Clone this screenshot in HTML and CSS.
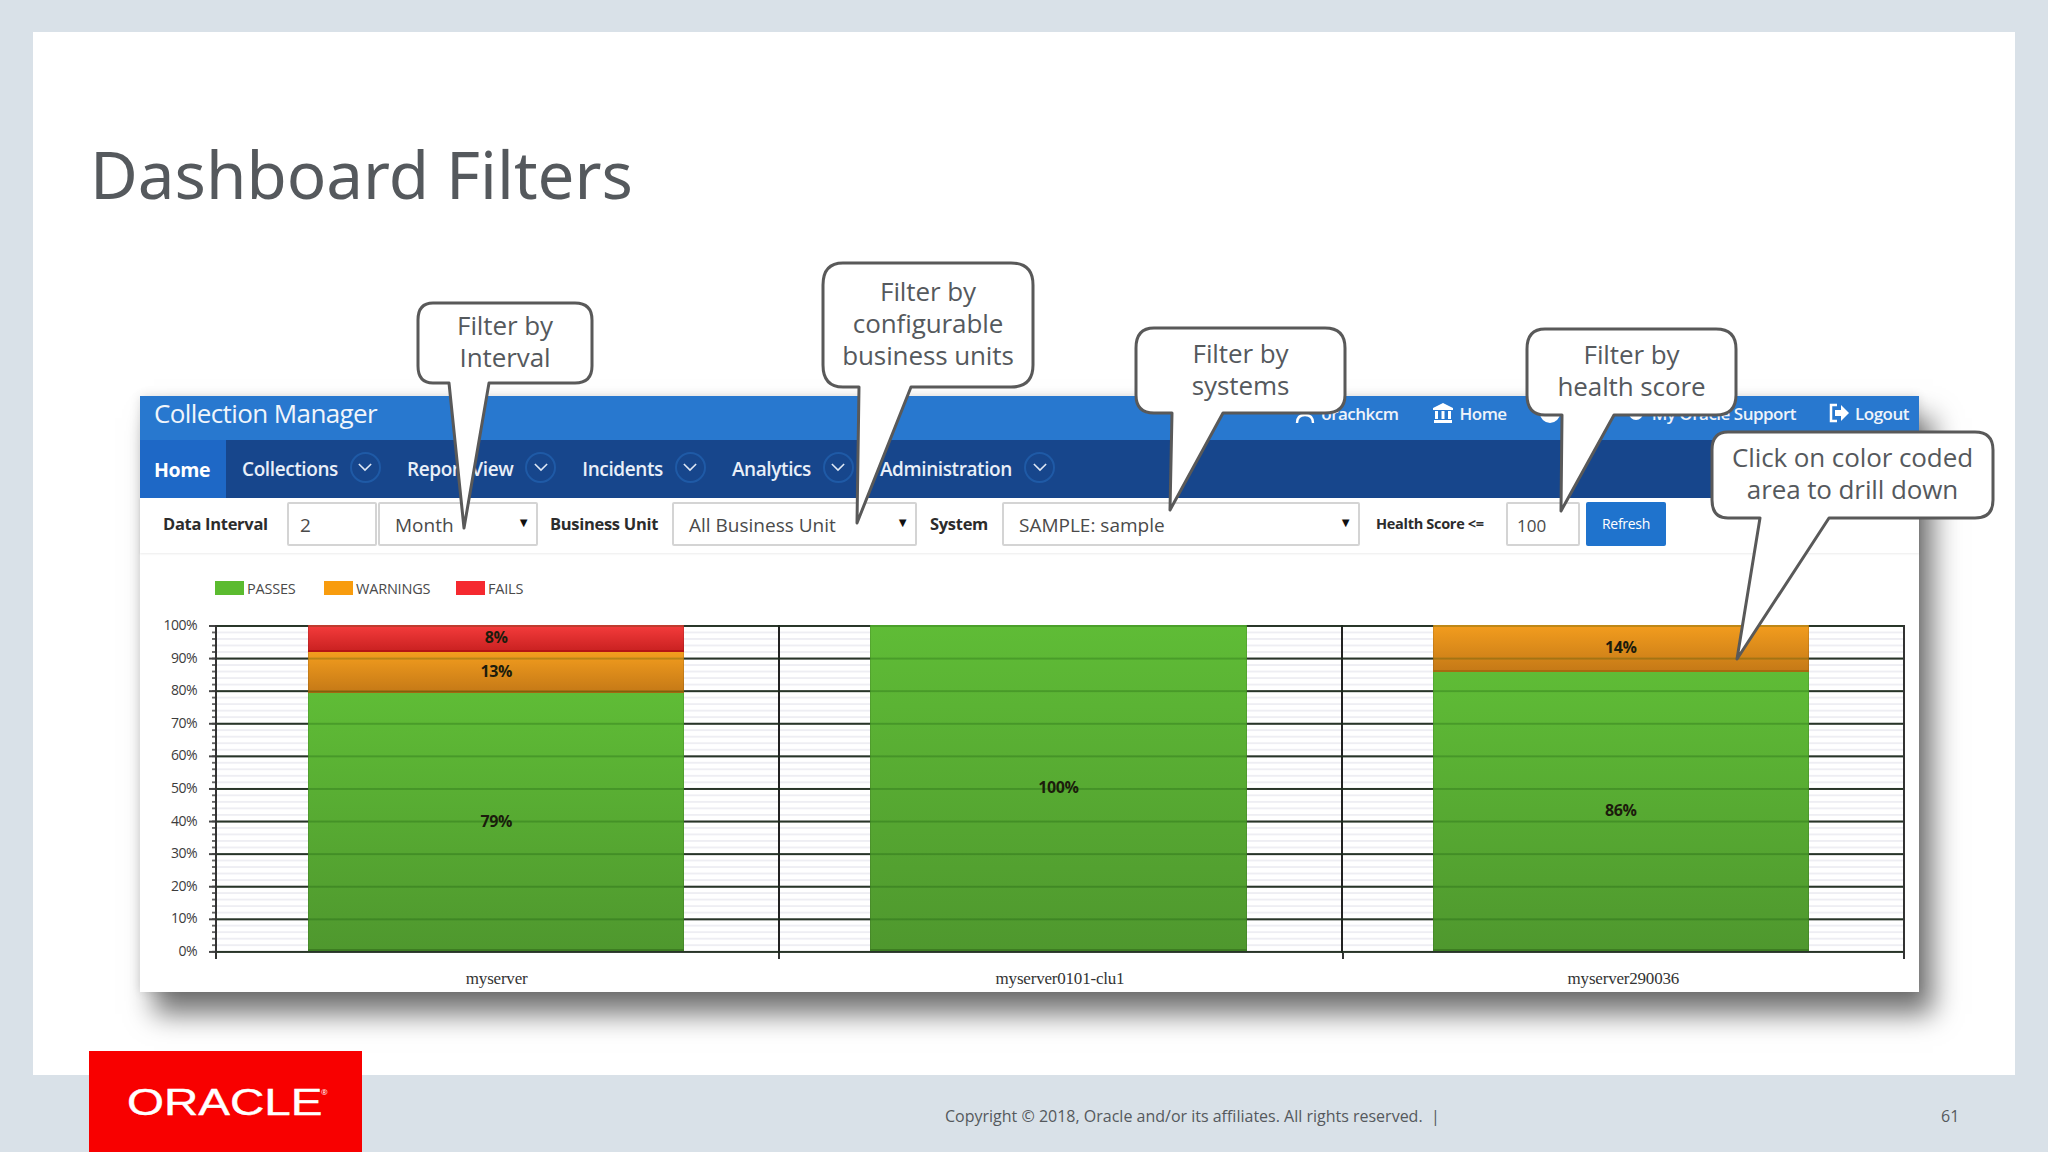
FILE: index.html
```html
<!DOCTYPE html>
<html lang="en">

<head>
    <meta charset="UTF-8" />
    <title>Dashboard Filters</title>
    <link rel="stylesheet" href="styles.css">
</head>

<body>
    <div class="slide">
        <h1 class="slide-title">Dashboard Filters</h1>

        <div class="app">
            <div class="app-header">
                <div class="app-name">Collection Manager</div>
                <div class="app-links">
                    <span class="app-link link-user">
                        <svg class="link-icon" viewBox="0 0 22 22"><path d="M3 21c0-5 3-8 8-8s8 3 8 8" fill="none" stroke="#fff" stroke-width="2.4"/><circle cx="11" cy="6" r="5" fill="#fff"/></svg>
                        orachkcm
                    </span>
                    <span class="app-link link-home">
                        <svg class="link-icon" viewBox="0 0 22 22"><path d="M11 1 1 6v2h20V6zM3 9h3v8H3zM9.500 9h3v8h-3zM16 9h3v8h-3zM2 18h18v3H2z" fill="#fff"/></svg>
                        Home
                    </span>
                    <span class="app-link link-help">
                        <svg class="link-icon" viewBox="0 0 22 22"><circle cx="11" cy="11" r="10" fill="#fff"/></svg>
                    </span>
                    <span class="app-link link-support">
                        <svg class="link-icon" viewBox="0 0 22 22"><circle cx="11" cy="11" r="7" fill="#fff"/></svg>
                        My Oracle Support
                    </span>
                    <span class="app-link link-logout">
                        <svg class="link-icon" viewBox="0 0 22 22"><path d="M9 3H3v16h6" fill="none" stroke="#fff" stroke-width="2.500"/><path d="M7 8h6V3l8 8-8 8v-5H7z" fill="#fff"/></svg>
                        Logout
                    </span>
                </div>
            </div>

            <div class="app-nav">
                <div class="nav-home">Home</div>
                <div class="nav-item">Collections <span class="nav-chevron"><svg viewBox="0 0 16 10"><path d="M1 1l7 7 7-7" fill="none" stroke="#dfe8f5" stroke-width="1.800"/></svg></span></div>
                <div class="nav-item">Report View <span class="nav-chevron"><svg viewBox="0 0 16 10"><path d="M1 1l7 7 7-7" fill="none" stroke="#dfe8f5" stroke-width="1.800"/></svg></span></div>
                <div class="nav-item">Incidents <span class="nav-chevron"><svg viewBox="0 0 16 10"><path d="M1 1l7 7 7-7" fill="none" stroke="#dfe8f5" stroke-width="1.800"/></svg></span></div>
                <div class="nav-item">Analytics <span class="nav-chevron"><svg viewBox="0 0 16 10"><path d="M1 1l7 7 7-7" fill="none" stroke="#dfe8f5" stroke-width="1.800"/></svg></span></div>
                <div class="nav-item">Administration <span class="nav-chevron"><svg viewBox="0 0 16 10"><path d="M1 1l7 7 7-7" fill="none" stroke="#dfe8f5" stroke-width="1.800"/></svg></span></div>
            </div>

            <div class="filters">
                <span class="filter-label label-interval">Data Interval</span>
                <div class="field field-number">2</div>
                <div class="field field-period">Month <span class="field-arrow">▼</span></div>
                <span class="filter-label label-unit">Business Unit</span>
                <div class="field field-unit">All Business Unit <span class="field-arrow">▼</span></div>
                <span class="filter-label label-system">System</span>
                <div class="field field-system">SAMPLE: sample <span class="field-arrow">▼</span></div>
                <span class="filter-label label-health">Health Score &lt;=</span>
                <div class="field field-score">100</div>
                <div class="refresh">Refresh</div>
            </div>

            <div class="legend">
                <span class="legend-swatch swatch-pass"></span><span class="legend-text text-pass">PASSES</span>
                <span class="legend-swatch swatch-warn"></span><span class="legend-text text-warn">WARNINGS</span>
                <span class="legend-swatch swatch-fail"></span><span class="legend-text">FAILS</span>
            </div>

            <div class="chart">
                <div class="y-axis">
                    <span>100%</span>
                    <span>90%</span>
                    <span>80%</span>
                    <span>70%</span>
                    <span>60%</span>
                    <span>50%</span>
                    <span>40%</span>
                    <span>30%</span>
                    <span>20%</span>
                    <span>10%</span>
                    <span>0%</span>
                </div>
                <div class="y-ticks"></div>
                <div class="plot">
                    <div class="category">
                        <div class="bar">
                            <div class="seg seg-fail" style="height: 8.2%">8%</div>
                            <div class="seg seg-warn" style="height: 12.6%">13%</div>
                            <div class="seg seg-pass" style="height: 79.2%">79%</div>
                        </div>
                    </div>
                    <div class="category">
                        <div class="bar">
                            <div class="seg seg-pass" style="height: 100%">100%</div>
                        </div>
                    </div>
                    <div class="category">
                        <div class="bar">
                            <div class="seg seg-warn" style="height: 14.3%">14%</div>
                            <div class="seg seg-pass" style="height: 85.7%">86%</div>
                        </div>
                    </div>
                    <div class="plot-lines"></div>
                </div>
            </div>
            <div class="x-axis">
                <div class="x-label">myserver</div>
                <div class="x-label">myserver0101-clu1</div>
                <div class="x-label">myserver290036</div>
            </div>
        </div>

        <!-- callouts sit over the app, tails drawn in page coordinates of each box -->
        <div class="callout callout-interval">
            <svg class="callout-shape" width="178" height="229" viewBox="0 0 178 229"><path d="M17 2H159Q176 2 176 19V65Q176 82 159 82H73L48 227 33 82H17Q2 82 2 65V19Q2 2 17 2Z"/></svg>
            <div class="callout-text">Filter by<br>Interval</div>
        </div>
        <div class="callout callout-units">
            <svg class="callout-shape" width="214" height="264" viewBox="0 0 214 264"><path d="M22 2H190Q212 2 212 24V104Q212 126 190 126H90L36 262 38 126H22Q2 126 2 104V24Q2 2 22 2Z"/></svg>
            <div class="callout-text">Filter by<br>configurable<br>business units</div>
        </div>
        <div class="callout callout-systems">
            <svg class="callout-shape" width="213" height="186" viewBox="0 0 213 186"><path d="M20 2H191Q211 2 211 22V69Q211 87 191 87H89L36 184 38 87H20Q2 87 2 69V22Q2 2 20 2Z"/></svg>
            <div class="callout-text">Filter by<br>systems</div>
        </div>
        <div class="callout callout-health">
            <svg class="callout-shape" width="213" height="186" viewBox="0 0 213 186"><path d="M20 2H191Q211 2 211 22V68Q211 88 191 88H89L36 184 37 88H20Q2 88 2 68V22Q2 2 20 2Z"/></svg>
            <div class="callout-text">Filter by<br>health score</div>
        </div>
        <div class="callout callout-drill">
            <svg class="callout-shape" width="285" height="231" viewBox="0 0 285 231"><path d="M18 2H265Q283 2 283 20V70Q283 88 265 88H119L27 229 50 88H18Q2 88 2 70V20Q2 2 18 2Z"/></svg>
            <div class="callout-text">Click on color coded<br>area to drill down</div>
        </div>
    </div>

    <div class="footer">
        <span class="copyright">Copyright © 2018, Oracle and/or its affiliates. All rights reserved.&nbsp; |</span>
        <span class="page-number">61</span>
    </div>

    <div class="oracle-logo">
        <span class="oracle-word">ORACLE</span><span class="oracle-reg">®</span>
    </div>
</body>

</html>
```

FILE: styles.css
```css
html,
body {
    margin: 0;
    height: 1152px;
    overflow: hidden;
}

body {
    background-color: #d9e1e8;
    font-family: "Open Sans", "Noto Sans", sans-serif;
    padding-top: 32px;
    box-sizing: border-box;
    position: relative;
}

.slide {
    position: relative;
    box-sizing: border-box;
    margin: 0 33px;
    height: 1043px;
    background-color: #fff;
    padding-top: 96px;
}

.slide-title {
    margin: 0 0 0 57px;
    height: 268px;
    font-family: "Noto Sans", sans-serif;
    font-size: 65.500px;
    line-height: 92px;
    font-weight: 400;
    color: #55595d;
}

/* app screenshot */
.app {
    margin-left: 107px;
    width: 1779px;
    height: 596px;
    background-color: #fff;
    box-shadow: 14px 22px 26px rgba(0, 0, 0, 0.55), 0 0 10px rgba(0, 0, 0, 0.12);
}

.app-header {
    display: flex;
    justify-content: space-between;
    align-items: center;
    height: 44px;
    box-sizing: border-box;
    padding-bottom: 10px;
    background-color: #2878cf;
    color: #fff;
}

.app-name {
    margin-left: 14px;
    font-size: 26px;
    letter-spacing: -0.6px;
    color: #f0f5fb;
}

.app-links {
    display: flex;
    align-items: center;
    font-size: 17px;
    letter-spacing: -0.5px;
    font-weight: 600;
    padding-right: 10px;
    color: #eef3fa;
}

.app-link {
    display: flex;
    align-items: center;
    gap: 5px;
}

.link-home {
    margin-left: 34px;
}

.link-help {
    margin-left: 32px;
}

.link-support {
    margin-left: 64px;
}

.link-logout {
    margin-left: 32px;
}

.link-icon {
    width: 22px;
    height: 22px;
}

.app-nav {
    display: flex;
    align-items: center;
    height: 58px;
    background-color: #17468c;
    color: #e9eff8;
    font-size: 19px;
    letter-spacing: -0.4px;
    font-weight: 600;
}

.nav-home {
    display: flex;
    align-items: center;
    height: 100%;
    width: 86px;
    box-sizing: border-box;
    padding-left: 14px;
    margin-right: 16px;
    background-color: #1e68c6;
    color: #fff;
    font-size: 19.500px;
    font-weight: 700;
}

.nav-item {
    display: flex;
    align-items: center;
    gap: 12px;
    margin-right: 26px;
}

.nav-chevron {
    display: flex;
    align-items: center;
    justify-content: center;
    box-sizing: border-box;
    width: 31px;
    height: 31px;
    border: 2px solid #1f5aa6;
    border-radius: 50%;
    margin-top: -4px;
}

.nav-chevron svg {
    width: 14px;
    height: 9px;
}

.filters {
    display: flex;
    align-items: center;
    height: 55px;
    box-sizing: border-box;
    padding-bottom: 4px;
    box-shadow: 0 1px 2px rgba(0, 0, 0, 0.08);
    font-size: 16px;
}

.filter-label {
    font-weight: 700;
    color: #2c2c2c;
    font-size: 16.500px;
    letter-spacing: -0.3px;
}

.label-interval {
    margin-left: 23px;
    width: 124px;
}

.label-unit {
    margin-left: 12px;
    width: 122px;
}

.label-system {
    margin-left: 13px;
    width: 72px;
}

.label-health {
    margin-left: 16px;
    width: 130px;
    font-size: 14.500px;
}

.field {
    position: relative;
    box-sizing: border-box;
    height: 44px;
    line-height: 43px;
    background-color: #fff;
    border: 2px solid #d4d4d4;
    border-radius: 2px;
    padding-left: 15px;
    font-size: 19px;
    color: #4a4a4a;
}

.field-number {
    width: 90px;
    padding-left: 11px;
}

.field-period {
    width: 160px;
    margin-left: 1px;
}

.field-unit {
    width: 245px;
}

.field-system {
    width: 358px;
}

.field-score {
    width: 74px;
    padding-left: 9px;
    font-size: 17px;
}

.field-arrow {
    position: absolute;
    right: 6px;
    top: -3px;
    font-size: 13px;
    color: #111;
}

.refresh {
    width: 80px;
    height: 44px;
    margin-left: 6px;
    line-height: 44px;
    text-align: center;
    font-size: 14px;
    letter-spacing: -0.3px;
    color: #fff;
    background-color: #1f73cd;
    border-radius: 2px;
}

.legend {
    display: flex;
    align-items: center;
    height: 14px;
    margin: 28px 0 0 75px;
    font-size: 14.500px;
    color: #4a4a4a;
}

.legend-swatch {
    width: 29px;
    height: 14px;
    margin-right: 3px;
}

.legend-text {
    letter-spacing: -0.2px;
}

.text-pass {
    width: 77px;
}

.text-warn {
    width: 100px;
}

.swatch-pass {
    background-color: #5bbb2f;
}

.swatch-warn {
    background-color: #f89c0e;
}

.swatch-fail {
    background-color: #f5292f;
}

/* chart */
.chart {
    display: flex;
    margin-top: 30px;
    height: 326px;
}

.y-axis {
    display: flex;
    flex-direction: column;
    justify-content: space-between;
    box-sizing: border-box;
    width: 57px;
    height: 344px;
    margin-top: -9px;
    margin-right: 12px;
    text-align: right;
    font-size: 14px;
    line-height: 18px;
    letter-spacing: -0.5px;
    color: #3c3c3c;
}

.y-ticks {
    width: 6px;
    height: 328px;
    background-image:
        linear-gradient(#444 2px, transparent 2px),
        linear-gradient(#666 2px, transparent 2px);
    background-size: 100% 32.600px, 3px 6.520px;
    background-repeat: repeat-y;
    background-position: 0 0, right 0;
}

.plot {
    position: relative;
    display: flex;
    flex-shrink: 0;
    width: 1690px;
    height: 328px;
    box-sizing: border-box;
    border-left: 2px solid #333;
    border-right: 2px solid #333;
    background-image:
        linear-gradient(#333 2px, transparent 2px),
        linear-gradient(#eeeef3 2px, transparent 2px);
    background-size: 100% 32.600px, 100% 6.520px;
}

.category {
    flex: 1;
    box-sizing: border-box;
    padding: 0 94px 0 90px;
    border-left: 2px solid #222;
}

.category:first-child {
    padding-left: 91px;
    border-left: 0;
}

.bar {
    display: flex;
    flex-direction: column;
    height: 326px;
}

.seg {
    display: flex;
    align-items: center;
    justify-content: center;
    box-sizing: border-box;
    font-size: 16px;
    font-weight: 700;
    letter-spacing: -0.4px;
    color: #1c1c0c;
    box-shadow: inset 1px 0 0 rgba(0, 0, 0, 0.1), inset -1px 0 0 rgba(0, 0, 0, 0.1);
}

.seg-pass {
    background-image: linear-gradient(#5fbc36, #4f982e);
    border-bottom: 2px solid #3d7d22;
}

.seg-warn {
    background-image: linear-gradient(#f39d1e, #c67a17);
    border-bottom: 2px solid #a86a10;
}

.seg-fail {
    background-image: linear-gradient(#f53c3c, #cb2222);
    border-bottom: 2px solid #b51414;
}

/* darker grid lines showing through the bars */
.plot-lines {
    position: absolute;
    inset: 0;
    background-image: linear-gradient(rgba(0, 60, 0, 0.22) 2px, transparent 2px);
    background-size: 100% 32.600px;
    pointer-events: none;
}

.x-axis {
    display: flex;
    width: 1690px;
    margin-left: 75px;
    margin-top: 2px;
    font-family: "Liberation Serif", serif;
    font-size: 17px;
    letter-spacing: -0.2px;
    color: #333;
    text-align: center;
}

.x-label {
    position: relative;
    flex: 1;
    padding-top: 16px;
}

.x-label::before {
    content: "";
    position: absolute;
    left: 0;
    top: 0;
    width: 2px;
    height: 6px;
    background-color: #333;
}

.x-label:last-child::after {
    content: "";
    position: absolute;
    right: 0;
    top: 0;
    width: 2px;
    height: 6px;
    background-color: #333;
}

/* callouts */
.callout {
    position: absolute;
}

.callout-shape {
    display: block;
}

.callout-shape path {
    fill: #fff;
    stroke: #595959;
    stroke-width: 3;
    stroke-linejoin: round;
}

.callout-text {
    position: absolute;
    left: 0;
    right: 0;
    top: 11px;
    text-align: center;
    font-family: "Open Sans", sans-serif;
    font-size: 26px;
    line-height: 32px;
    letter-spacing: -0.1px;
    color: #55595d;
}

.callout-interval {
    left: 383px;
    top: 269px;
}

.callout-interval .callout-text {
    top: 8px;
}

.callout-units {
    left: 788px;
    top: 229px;
}

.callout-units .callout-text {
    top: 14px;
}

.callout-systems {
    left: 1101px;
    top: 294px;
}

.callout-health {
    left: 1492px;
    top: 295px;
}

.callout-drill {
    left: 1677px;
    top: 398px;
}

.callout-drill .callout-text {
    top: 11px;
}

/* footer */
.footer {
    display: flex;
    align-items: center;
    height: 77px;
    padding-top: 5px;
    box-sizing: border-box;
    padding-left: 945px;
    font-size: 16px;
    color: #55595d;
}

.copyright {
    width: 996px;
}

.oracle-logo {
    position: absolute;
    left: 89px;
    top: 1051px;
    width: 273px;
    height: 101px;
    background-color: #f80000;
    color: #fff;
}

.oracle-word {
    position: absolute;
    left: 38px;
    top: 30px;
    font-family: "Liberation Sans", sans-serif;
    font-size: 36px;
    line-height: 44px;
    -webkit-text-stroke: 0.4px #fff;
    transform: scaleX(1.320);
    transform-origin: left center;
}

.oracle-reg {
    position: absolute;
    left: 232px;
    top: 35px;
    font-size: 8px;
}
```
